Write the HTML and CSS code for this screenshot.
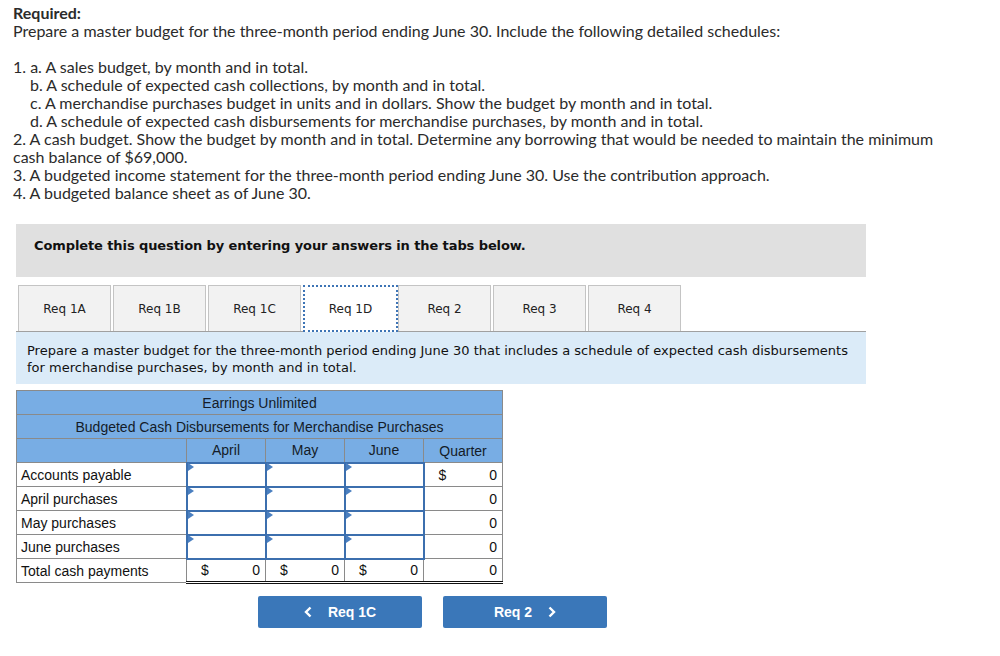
FILE: index.html
```html
<!DOCTYPE html>
<html>
<head>
<meta charset="utf-8">
<link rel="stylesheet" href="styles.css">
</head>
<body>
<div class="page">
  <div class="req">
    <div class="req-title">Required:</div>
    <div>Prepare a master budget for the three-month period ending June 30. Include the following detailed schedules:</div>
    <div class="gap"></div>
    <div>1. a. A sales budget, by month and in total.</div>
    <div class="ind">b. A schedule of expected cash collections, by month and in total.</div>
    <div class="ind">c. A merchandise purchases budget in units and in dollars. Show the budget by month and in total.</div>
    <div class="ind">d. A schedule of expected cash disbursements for merchandise purchases, by month and in total.</div>
    <div class="wrap">2. A cash budget. Show the budget by month and in total. Determine any borrowing that would be needed to maintain the minimum cash balance of $69,000.</div>
    <div>3. A budgeted income statement for the three-month period ending June 30. Use the contribution approach.</div>
    <div>4. A budgeted balance sheet as of June 30.</div>
  </div>

  <div class="complete">Complete this question by entering your answers in the tabs below.</div>

  <div class="tabs">
    <div class="tab">Req 1A</div>
    <div class="tab">Req 1B</div>
    <div class="tab">Req 1C</div>
    <div class="tab active">Req 1D</div>
    <div class="tab">Req 2</div>
    <div class="tab">Req 3</div>
    <div class="tab">Req 4</div>
  </div>

  <div class="instr">Prepare a master budget for the three-month period ending June 30 that includes a schedule of expected cash disbursements for merchandise purchases, by month and in total.</div>

  <table class="sheet">
    <colgroup>
      <col class="c-label"><col class="c-num"><col class="c-num"><col class="c-num"><col class="c-num">
    </colgroup>
    <tr class="hd"><td colspan="5">Earrings Unlimited</td></tr>
    <tr class="hd"><td colspan="5">Budgeted Cash Disbursements for Merchandise Purchases</td></tr>
    <tr class="hd"><td></td><td>April</td><td>May</td><td>June</td><td>Quarter</td></tr>
    <tr>
      <td class="lbl">Accounts payable</td>
      <td class="inp"><span class="flag"></span></td>
      <td class="inp"><span class="flag"></span></td>
      <td class="inp"><span class="flag"></span></td>
      <td class="val"><span class="cur">$</span>0</td>
    </tr>
    <tr>
      <td class="lbl">April purchases</td>
      <td class="inp"><span class="flag"></span></td>
      <td class="inp"><span class="flag"></span></td>
      <td class="inp"><span class="flag"></span></td>
      <td class="val">0</td>
    </tr>
    <tr>
      <td class="lbl">May purchases</td>
      <td class="inp"><span class="flag"></span></td>
      <td class="inp"><span class="flag"></span></td>
      <td class="inp"><span class="flag"></span></td>
      <td class="val">0</td>
    </tr>
    <tr>
      <td class="lbl">June purchases</td>
      <td class="inp"><span class="flag"></span></td>
      <td class="inp"><span class="flag"></span></td>
      <td class="inp"><span class="flag"></span></td>
      <td class="val">0</td>
    </tr>
    <tr class="total">
      <td class="lbl">Total cash payments</td>
      <td class="val"><span class="cur">$</span>0</td>
      <td class="val"><span class="cur">$</span>0</td>
      <td class="val"><span class="cur">$</span>0</td>
      <td class="val">0</td>
    </tr>
  </table>

  <div class="nav">
    <button class="btn"><svg class="chev" width="8" height="12" viewBox="0 0 8 12"><path d="M6.5 1.5 L2 6 L6.5 10.5" fill="none" stroke="#fff" stroke-width="2.4"/></svg><span class="blabel">Req 1C</span></button>
    <button class="btn"><span class="blabel">Req 2</span><svg class="chev" width="8" height="12" viewBox="0 0 8 12"><path d="M1.5 1.5 L6 6 L1.5 10.5" fill="none" stroke="#fff" stroke-width="2.4"/></svg></button>
  </div>
</div>
</body>
</html>
```
FILE: styles.css
```css
* { box-sizing: border-box; }
html, body { margin: 0; padding: 0; background: #fff; }
.page { padding: 4px 0 0 0; }

.req {
  padding-left: 13px;
  width: 960px;
  font-family: Lato, "Open Sans", sans-serif;
  font-size: 16px;
  line-height: 18px;
  color: #2b2b2b;
}
.req-title { font-weight: 700; }
.gap { height: 18px; }
.ind { padding-left: 17px; }
.wrap { width: 935px; }

.complete {
  margin: 22px 0 0 16px;
  width: 850px;
  height: 53px;
  background: #e0e0e0;
  font-family: Verdana, "DejaVu Sans", sans-serif;
  font-weight: 700;
  font-size: 13px;
  color: #111;
  padding: 14px 0 0 18px;
  letter-spacing: -0.1px;
}

.tabs {
  margin: 8px 0 0 16px;
  width: 850px;
  display: flex;
  gap: 2px;
  padding-left: 2px;
  border-bottom: 1px solid #a0a0a0;
  height: 47px;
}
.tab {
  width: 93px;
  height: 46px;
  background: #f2f2f2;
  border: 1px solid #c4c4c4;
  border-bottom: none;
  font-family: Verdana, "DejaVu Sans", sans-serif;
  font-size: 12px;
  color: #222;
  display: flex;
  align-items: center;
  justify-content: center;
}
.tab.active {
  background: #fff;
  border: 2px dotted #3d74b5;
  height: 47px;
  margin-bottom: -1px;
  width: 95px;
  margin-right: -2px;
}

.instr {
  margin-left: 16px;
  width: 850px;
  height: 52px;
  background: #dbebf8;
  font-family: Verdana, "DejaVu Sans", sans-serif;
  font-size: 13px;
  line-height: 17px;
  color: #111;
  padding: 10px 4px 0 11px;
}

.sheet {
  margin: 6px 0 0 16px;
  border-collapse: collapse;
  font-family: Arial, "Liberation Sans", sans-serif;
  font-size: 14px;
  color: #111;
  table-layout: fixed;
  width: 487px;
}
.c-label { width: 170px; }
.c-num { width: 79px; }
.sheet td {
  border: 1px solid #8a8a8a;
  height: 24px;
  padding: 0 4px;
  white-space: nowrap;
}
.hd td {
  background: #78ade4;
  text-align: center;
  color: #141c28;
}
.lbl { text-align: left; padding-left: 4px !important; }
.inp {
  position: relative;
  border: 2px solid #3c6fae !important;
}
.flag {
  position: absolute;
  left: 0;
  top: 0;
  width: 0;
  height: 0;
  border-top: 4px solid transparent;
  border-bottom: 4px solid transparent;
  border-left: 6px solid #4a7fc0;
  margin-top: -1px;
}
.val { text-align: right; padding-right: 5px !important; }
.cur { float: left; padding-left: 10px; }
.total td { border-top: 1px solid #111; }
.total td.val { border-bottom: 3px double #111; }

.nav {
  margin: 12px 0 0 258px;
  display: flex;
  gap: 21px;
}
.btn {
  width: 164px;
  height: 32px;
  border: none;
  border-radius: 2px;
  background: #3a77b9;
  color: #fff;
  font-family: Arial, "Liberation Sans", sans-serif;
  font-weight: 700;
  font-size: 14px;
  display: flex;
  align-items: center;
  justify-content: center;
  gap: 16px;
  padding: 0;
}
.chev { display: block; }
```
